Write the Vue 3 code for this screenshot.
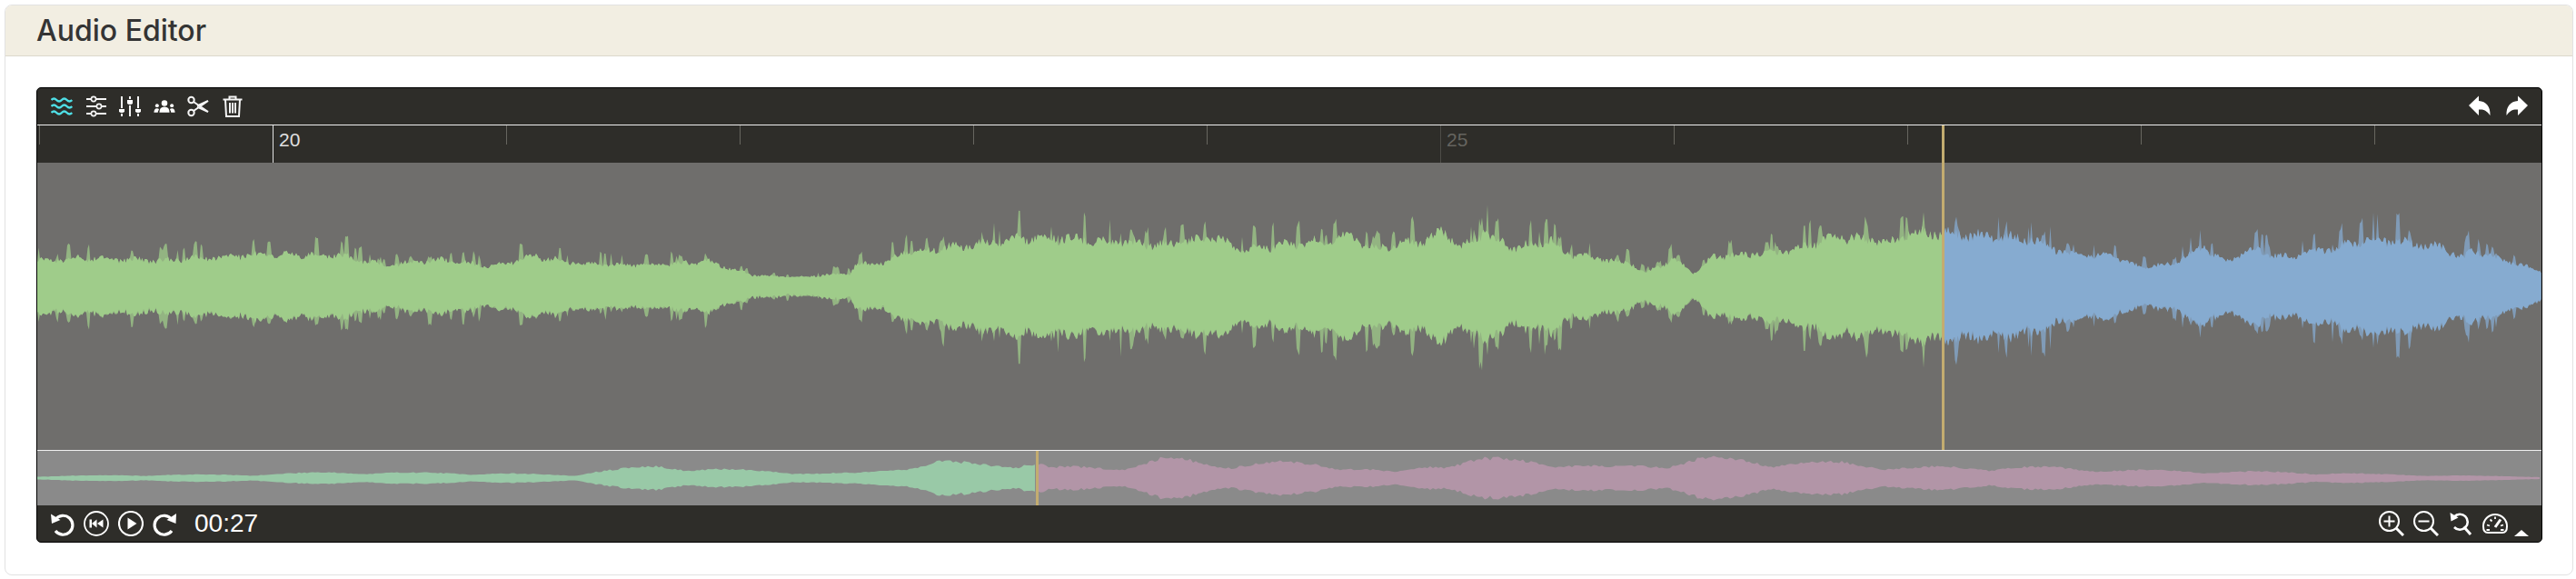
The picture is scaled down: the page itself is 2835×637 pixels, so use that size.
<template>
  <div class="card">
    <div class="card-header">Audio Editor</div>
    <div class="card-body">
      <div class="editor">
        <div class="toolbar">
          <div class="icon-row">
            <svg class="tool-icon active" viewBox="0 0 24 24">
              <path d="M0.5 5 q2.8-3 5.7 0 t5.7 0 t5.7 0 t5.7 0 M0.5 12 q2.8-3 5.7 0 t5.7 0 t5.7 0 t5.7 0 M0.5 19 q2.8-3 5.7 0 t5.7 0 t5.7 0 t5.7 0" />
            </svg>
            <svg class="tool-icon" viewBox="0 0 24 24">
              <path d="M1 4H23M1 12H23M1 20H23" />
              <circle class="knob" cx="9" cy="4" r="2.6" />
              <circle class="knob" cx="15" cy="12" r="2.6" />
              <circle class="knob" cx="9" cy="20" r="2.6" />
            </svg>
            <svg class="tool-icon" viewBox="0 0 24 24">
              <path d="M3 1V14M3 20V23M12 1V4M12 11V23M21 1V14M21 20V23" />
              <path class="solid" d="M0 15H6V18L4 19H2L0 18ZM9 5H15V9L13 10H11L9 9ZM18 15H24V18L22 19H20L18 18Z" />
            </svg>
            <svg class="tool-icon" viewBox="0 0 28 24">
              <circle class="solid" cx="14" cy="8" r="3.8" />
              <path class="solid" d="M7.5 20 q0-7.5 6.5-7.5 t6.5 7.5Z" />
              <circle class="solid" cx="4.5" cy="11" r="2.3" />
              <path class="solid" d="M0.5 20 q0-5.5 4-5.5 q2 0 2.5 1.5 q-1.5 2-1.5 4Z" />
              <circle class="solid" cx="23.5" cy="11" r="2.3" />
              <path class="solid" d="M27.5 20 q0-5.5-4-5.5 q-2 0-2.5 1.5 q1.5 2 1.5 4Z" />
            </svg>
            <svg class="tool-icon" viewBox="0 0 24 24">
              <circle cx="4.5" cy="5" r="3.2" />
              <circle cx="4.5" cy="19" r="3.2" />
              <path d="M7 7 L23 18 L11 12.5 M7 17 L23 6 L11 11.5" />
            </svg>
            <svg class="tool-icon" viewBox="0 0 24 24">
              <path d="M1.5 4.5H22.5M8.5 4.5V1.5H15.5V4.5M4 4.5L5 23H19L20 4.5M9 8V19.5M12 8V19.5M15 8V19.5" />
            </svg>
          </div>
          <div class="icon-row history">
            <svg class="tool-icon" viewBox="0 0 24 24">
              <path class="solid" d="M0 11 L11 0.5 V6 C19 6.5 24 12 23.5 22 C20 16.5 16 15 11 15.5 V22Z" />
            </svg>
            <svg class="tool-icon" viewBox="0 0 24 24">
              <path class="solid" d="M24 11 L13 0.5 V6 C5 6.5 0 12 0.5 22 C4 16.5 8 15 13 15.5 V22Z" />
            </svg>
          </div>
        </div>

        <div class="track-area">
          <div class="ruler">
            <div
              v-for="tick in ticks"
              :key="tick.x"
              class="tick"
              :class="{ major: tick.label === '20', dim: tick.label === '25' }"
            >
              <span v-if="tick.label" class="tick-label">{{ tick.label }}</span>
            </div>
          </div>
          <svg class="wave" viewBox="0 0 2756 316" preserveAspectRatio="none">
            <path :d="mainWave.playedSpikes" fill="#9fcc8a" opacity="0.75" />
            <path :d="mainWave.restSpikes" fill="#86abd0" opacity="0.75" />
            <path :d="mainWave.played" fill="#9fcc8a" />
            <path :d="mainWave.rest" fill="#86abd0" />
          </svg>
          <div class="playhead main-head"></div>
        </div>

        <div class="overview">
          <svg class="mini-wave" viewBox="0 0 2756 60" preserveAspectRatio="none">
            <path :d="miniWave.played" fill="#99c9a7" />
            <path :d="miniWave.rest" fill="#b295a7" />
          </svg>
          <div class="playhead mini-head"></div>
        </div>

        <div class="controls">
          <div class="icon-row transport">
            <svg class="ctl-icon" viewBox="0 0 28 28">
              <path d="M7 9.5 A10.5 10.5 0 1 1 7 22" stroke-width="3.2" />
              <path class="solid" d="M2 3.5 L3 14 L12.5 10Z" />
            </svg>
            <svg class="ctl-icon" viewBox="0 0 28 28">
              <circle cx="14" cy="14" r="13" stroke-width="1.8" />
              <path class="solid" d="M6.5 9.5H9V18.5H6.5ZM14.5 9.5V18.5L9 14ZM21.5 9.5V18.5L15 14Z" />
            </svg>
            <svg class="ctl-icon" viewBox="0 0 28 28">
              <circle cx="14" cy="14" r="13" stroke-width="2.2" />
              <path class="solid" d="M10.5 7.5 L20.5 14 L10.5 20.5Z" />
            </svg>
            <svg class="ctl-icon" viewBox="0 0 28 28">
              <path d="M21 9.5 A10.5 10.5 0 1 0 21 22" stroke-width="3.2" />
              <path class="solid" d="M26 3 L25.5 14 L15.5 10Z" />
            </svg>
            <span class="time">00:27</span>
          </div>
          <div class="icon-row zoom">
            <svg class="ctl-icon" viewBox="0 0 28 28">
              <circle cx="11.5" cy="11.5" r="10.5" stroke-width="2" />
              <path d="M11.5 5.5V17.5M5.5 11.5H17.5" stroke-width="2" />
              <path d="M19 19L27 27" stroke-width="3" />
            </svg>
            <svg class="ctl-icon" viewBox="0 0 28 28">
              <circle cx="11.5" cy="11.5" r="10.5" stroke-width="2" />
              <path d="M5.5 11.5H17.5" stroke-width="2" />
              <path d="M19 19L27 27" stroke-width="3" />
            </svg>
            <svg class="ctl-icon" viewBox="0 0 28 28">
              <path d="M7 6.5 A8.5 8.5 0 1 1 7 18" stroke-width="2.6" />
              <path class="solid" d="M2.5 2 L3.5 11.5 L11.5 7.5Z" />
              <path d="M17.5 17.5L25 26" stroke-width="3" />
            </svg>
            <svg class="ctl-icon" viewBox="0 0 28 28">
              <path d="M6 24 H22 C26 24 27 21 27 17 A13 13 0 0 0 1 17 C1 21 2 24 6 24Z" stroke-width="2" />
              <path d="M5 15.5L8 16.5M8.5 9.5L10.5 11.5M14 6.5V9M23 15.5L20 16.5M4.5 21 H8M20 21H23.5" stroke-width="1.8" />
              <path d="M14 18L20 9.5" stroke-width="3" />
            </svg>
            <span class="caret"></span>
          </div>
        </div>
      </div>
    </div>
  </div>
</template>

<script setup>
import { computed } from 'vue'

const WIDTH = 2756
const PLAYHEAD = 2097
const MINI_HEAD = 1100

// half heights of the waveform, read off the screenshot: [page x, amplitude]
const mainEnvelope = [
  [41, 28], [98, 31], [174, 28], [272, 34], [370, 35], [424, 23], [486, 29], [544, 22],
  [589, 33], [643, 24], [740, 24], [776, 28], [829, 12], [874, 10], [936, 14], [942, 24],
  [977, 26], [994, 38], [1052, 43], [1097, 50], [1142, 55], [1209, 50], [1276, 45], [1338, 53],
  [1365, 40], [1440, 48], [1485, 54], [1516, 42], [1569, 50], [1587, 60], [1610, 43], [1632, 60],
  [1663, 42], [1708, 50], [1721, 37], [1797, 24], [1810, 14], [1842, 30], [1864, 15], [1886, 32],
  [1976, 40], [2020, 55], [2087, 48], [2100, 58], [2140, 58], [2234, 52], [2279, 35], [2323, 33],
  [2354, 22], [2390, 24], [2426, 43], [2448, 27], [2480, 40], [2511, 32], [2547, 38], [2582, 45],
  [2613, 52], [2649, 48], [2689, 42], [2711, 30], [2720, 40], [2761, 27], [2797, 16]
]

const miniEnvelope = [
  [41, 2], [180, 3.5], [270, 3.5], [362, 6], [540, 5], [633, 3], [651, 7], [723, 12],
  [796, 9], [905, 5], [942, 5], [977, 9], [1031, 17], [1085, 14], [1141, 16], [1157, 11],
  [1229, 11], [1284, 21], [1338, 14], [1392, 16], [1446, 15], [1537, 6], [1573, 13], [1627, 20],
  [1700, 17], [1772, 11], [1844, 16], [1880, 21], [1953, 16], [2025, 16], [2097, 11], [2152, 11],
  [2242, 11], [2350, 8], [2441, 7], [2531, 6], [2622, 4], [2712, 2.5], [2797, 1.5]
]

const ticks = Array.from({ length: 11 }, (_, i) => ({
  x: 43 + i * 257,
  label: i === 1 ? '20' : i === 6 ? '25' : ''
}))

// small seeded generator so the picture is the same on every load
const makeRandom = (seed) => () => {
  seed = (seed * 1664525 + 1013904223) % 4294967296
  return seed / 4294967296
}

const amplitudeAt = (envelope, x) => {
  let i = 1
  while (i < envelope.length - 1 && envelope[i][0] < x) i++
  const [x0, a0] = envelope[i - 1]
  const [x1, a1] = envelope[i]
  const t = Math.min(1, Math.max(0, (x - x0) / (x1 - x0)))
  return a0 + (a1 - a0) * t
}

const outline = (columns, from, to, center, key) => {
  const part = columns.filter((c) => c.x >= from && c.x <= to)
  const top = part.map((c) => `${c.x} ${(center - c[key][0]).toFixed(1)}`)
  const bottom = part.reverse().map((c) => `${c.x} ${(center + c[key][1]).toFixed(1)}`)
  return 'M' + top.concat(bottom).join('L') + 'Z'
}

const mainWave = computed(() => {
  const random = makeRandom(73)
  const columns = []
  let left = 0
  let up = 0
  let down = 0
  for (let x = 0; x <= WIDTH; x += 1.5) {
    const amp = amplitudeAt(mainEnvelope, x + 41)
    const wobble = Math.sin(x / 5.3) * amp * 0.06
    const core = amp + wobble + (random() - 0.5) * amp * 0.2
    // a spike stays for a few columns so it reads as a thin blade
    if (left <= 0 && random() < 0.1) {
      left = 1 + Math.floor(random() * 3)
      up = amp * (0.18 + random() * 0.42)
      down = amp * (0.18 + random() * 0.42)
    }
    columns.push({
      x,
      core: [core, core + (random() - 0.5) * 4],
      peak: [core + (left > 0 ? up : 0), core + (left > 0 ? down : 0)]
    })
    left--
  }
  return {
    played: outline(columns, 0, PLAYHEAD, 136, 'core'),
    rest: outline(columns, PLAYHEAD, WIDTH, 136, 'core'),
    playedSpikes: outline(columns, 0, PLAYHEAD, 136, 'peak'),
    restSpikes: outline(columns, PLAYHEAD, WIDTH, 136, 'peak')
  }
})

const miniWave = computed(() => {
  const random = makeRandom(19)
  const columns = []
  for (let x = 0; x <= WIDTH; x += 3) {
    const amp = amplitudeAt(miniEnvelope, x + 41)
    const lump = 0.72 + 0.42 * Math.abs(Math.sin(x / 38))
    const value = amp * lump * (0.9 + random() * 0.2)
    columns.push({ x, core: [value, value] })
  }
  return {
    played: outline(columns, 0, MINI_HEAD, 30, 'core'),
    rest: outline(columns, MINI_HEAD, WIDTH, 30, 'core')
  }
})
</script>

<style scoped>
.card {
  margin: 5px 3px 3px 5px;
  border: 1px solid #e2e2e2;
  border-radius: 8px;
  background: #fff;
  overflow: hidden;
}

.card-header {
  height: 55px;
  padding-left: 34px;
  display: flex;
  align-items: center;
  background: #f2eee2;
  border-bottom: 1px solid #dcd8cc;
  font-family: Inter, "Liberation Sans", sans-serif;
  font-size: 32px;
  font-weight: 500;
  color: #343434;
}

.card-body {
  padding: 34px 33px 35px 34px;
}

.editor {
  border: 1px solid #000;
  border-radius: 5px;
  background: #2e2d29;
  overflow: hidden;
  font-family: "Liberation Sans", sans-serif;
}

.toolbar {
  height: 40px;
  padding: 0 15px;
  display: flex;
  align-items: center;
  justify-content: space-between;
  border-bottom: 1px solid #f0f0f0;
}

.icon-row {
  display: flex;
  align-items: center;
  gap: 13.6px;
}

.history {
  gap: 17px;
}

.tool-icon {
  width: 24px;
  height: 24px;
  fill: none;
  stroke: #f5f5f5;
  stroke-width: 2;
}

.tool-icon.active {
  stroke: #4fdfe6;
  stroke-width: 2.4;
}

.solid {
  fill: #fff;
  stroke: none;
}

.knob {
  fill: #2e2d29;
  stroke-width: 1.6;
}

.track-area {
  position: relative;
}

.ruler {
  height: 41px;
  padding-left: 2px;
  display: flex;
  overflow: hidden;
}

.tick {
  position: relative;
  box-sizing: border-box;
  flex: 0 0 257px;
  height: 21px;
  border-left: 1px solid #67665f;
}

.tick.major {
  height: 41px;
  border-left-color: #e2e2e2;
}

.tick.dim {
  height: 41px;
  border-left-color: #4d4c47;
}

.tick-label {
  position: absolute;
  left: 6px;
  top: 5px;
  font-size: 21px;
  line-height: 1;
  color: #e0e0e0;
}

.tick.dim .tick-label {
  color: #65645f;
}

.wave {
  display: block;
  width: 100%;
  height: 316px;
  background: #6f6e6c;
}

.playhead {
  position: absolute;
  top: 0;
  bottom: 0;
  background: #c3ac70;
}

.main-head {
  left: 2096px;
  width: 3px;
}

.overview {
  position: relative;
  height: 60px;
  border-top: 1px solid #f0f0f0;
  background: #8a8a8a;
}

.mini-wave {
  display: block;
  width: 100%;
  height: 60px;
}

.mini-head {
  left: 1099px;
  width: 3px;
}

.controls {
  height: 40px;
  padding: 0 14px 0 13px;
  display: flex;
  align-items: center;
  justify-content: space-between;
}

.transport {
  gap: 10px;
}

.zoom {
  gap: 10px;
}

.ctl-icon {
  width: 28px;
  height: 28px;
  fill: none;
  stroke: #fff;
}

.time {
  margin-left: 8px;
  font-size: 28px;
  color: #fff;
}

.caret {
  align-self: flex-end;
  margin: 0 0 0 -3px;
  width: 0;
  height: 0;
  border-left: 8px solid transparent;
  border-right: 8px solid transparent;
  border-bottom: 7px solid #fff;
}
</style>

<style>
body {
  background: #fff;
}
</style>
